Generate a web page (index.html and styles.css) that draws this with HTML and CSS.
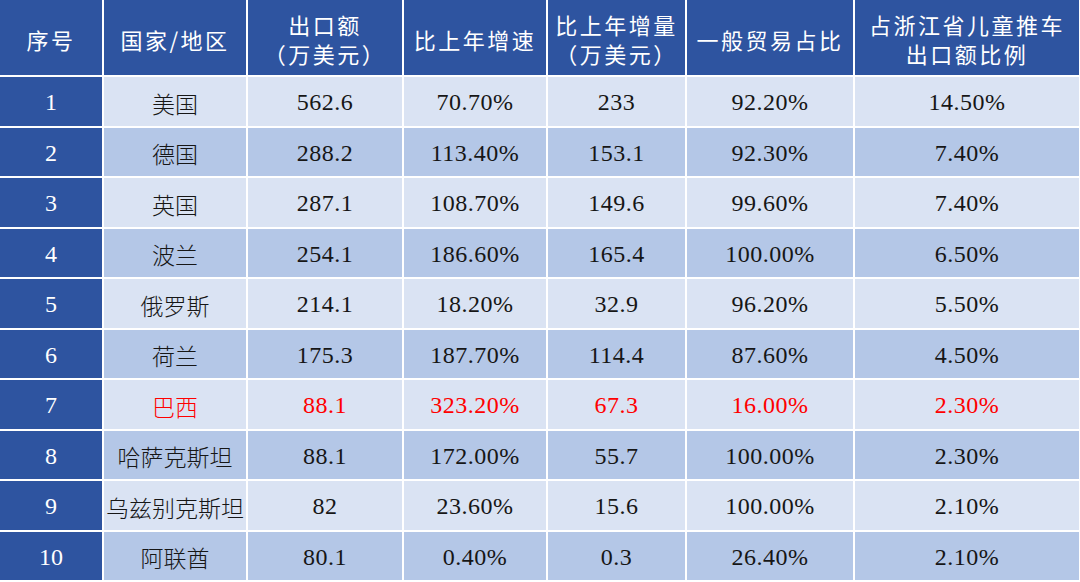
FILE: index.html
```html
<!DOCTYPE html>
<html lang="zh-CN">
<head>
<meta charset="utf-8">
<title>出口额表</title>
<link rel="stylesheet" href="styles.css">
</head>
<body>
<div class="table">
  <div class="hd">序号</div>
  <div class="hd">国家/地区</div>
  <div class="hd"><span class="ln">出口额</span><span class="ln">（万美元）</span></div>
  <div class="hd">比上年增速</div>
  <div class="hd"><span class="ln">比上年增量</span><span class="ln">（万美元）</span></div>
  <div class="hd">一般贸易占比</div>
  <div class="hd"><span class="ln">占浙江省儿童推车</span><span class="ln">出口额比例</span></div>

  <div class="idx">1</div><div class="c zh lt">美国</div><div class="c num lt">562.6</div><div class="c num lt">70.70%</div><div class="c num lt">233</div><div class="c num lt">92.20%</div><div class="c num lt">14.50%</div>
  <div class="idx">2</div><div class="c zh dk">德国</div><div class="c num dk">288.2</div><div class="c num dk">113.40%</div><div class="c num dk">153.1</div><div class="c num dk">92.30%</div><div class="c num dk">7.40%</div>
  <div class="idx">3</div><div class="c zh lt">英国</div><div class="c num lt">287.1</div><div class="c num lt">108.70%</div><div class="c num lt">149.6</div><div class="c num lt">99.60%</div><div class="c num lt">7.40%</div>
  <div class="idx">4</div><div class="c zh dk">波兰</div><div class="c num dk">254.1</div><div class="c num dk">186.60%</div><div class="c num dk">165.4</div><div class="c num dk">100.00%</div><div class="c num dk">6.50%</div>
  <div class="idx">5</div><div class="c zh lt">俄罗斯</div><div class="c num lt">214.1</div><div class="c num lt">18.20%</div><div class="c num lt">32.9</div><div class="c num lt">96.20%</div><div class="c num lt">5.50%</div>
  <div class="idx">6</div><div class="c zh dk">荷兰</div><div class="c num dk">175.3</div><div class="c num dk">187.70%</div><div class="c num dk">114.4</div><div class="c num dk">87.60%</div><div class="c num dk">4.50%</div>
  <div class="idx">7</div><div class="c zh lt red">巴西</div><div class="c num lt red">88.1</div><div class="c num lt red">323.20%</div><div class="c num lt red">67.3</div><div class="c num lt red">16.00%</div><div class="c num lt red">2.30%</div>
  <div class="idx">8</div><div class="c zh dk">哈萨克斯坦</div><div class="c num dk">88.1</div><div class="c num dk">172.00%</div><div class="c num dk">55.7</div><div class="c num dk">100.00%</div><div class="c num dk">2.30%</div>
  <div class="idx">9</div><div class="c zh lt">乌兹别克斯坦</div><div class="c num lt">82</div><div class="c num lt">23.60%</div><div class="c num lt">15.6</div><div class="c num lt">100.00%</div><div class="c num lt">2.10%</div>
  <div class="idx">10</div><div class="c zh dk">阿联酋</div><div class="c num dk">80.1</div><div class="c num dk">0.40%</div><div class="c num dk">0.3</div><div class="c num dk">26.40%</div><div class="c num dk">2.10%</div>
</div>
</body>
</html>
```

FILE: styles.css
```css
html, body {
  margin: 0;
  padding: 0;
  background: #ffffff;
}

.table {
  display: grid;
  grid-template-columns: 102px 142px 154px 142px 137px 166px 224px;
  grid-template-rows: 75px repeat(10, 48.5px);
  gap: 2px;
  width: 1079px;
  background: #ffffff;
}

.table > div {
  display: flex;
  flex-direction: column;
  align-items: center;
  justify-content: center;
  text-align: center;
  white-space: nowrap;
  overflow: visible;
  box-sizing: border-box;
}

.hd {
  background: #2e54a0;
  color: #ffffff;
  font-family: "Noto Sans CJK SC", "Noto Sans", sans-serif;
  font-size: 22px;
  letter-spacing: 2.5px;
  font-weight: 400;
  padding-top: 2px;
}

.ln {
  display: block;
  line-height: 29px;
  height: 29px;
  font-size: 22px;
}

.idx {
  background: #2e54a0;
  color: #ffffff;
  font-family: "Liberation Serif", serif;
  font-size: 24px;
  padding-top: 3px;
}

.c {
  color: #161616;
  font-size: 23px;
  padding-top: 3px;
}

.zh {
  font-family: "Noto Sans CJK SC", sans-serif;
  font-weight: 300;
}

.num {
  font-family: "Liberation Serif", "Noto Sans CJK SC", serif;
  font-size: 24px;
  letter-spacing: 0.5px;
}

.lt {
  background: #dae3f3;
}

.dk {
  background: #b4c7e7;
}

.red {
  color: #ff0000;
}
```
